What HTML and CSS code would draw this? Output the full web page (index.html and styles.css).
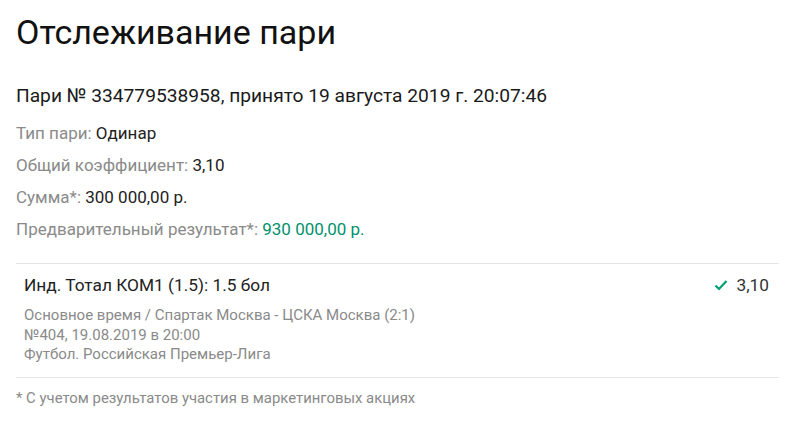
FILE: index.html
```html
<!DOCTYPE html>
<html lang="ru">
<head>
    <meta charset="UTF-8">
    <title>Отслеживание пари</title>
    <link rel="stylesheet" href="styles.css">
</head>
<body>
    <div class="tracking">
        <h1 class="tracking-title">Отслеживание пари</h1>

        <div class="bet-number">Пари № 334779538958, принято 19 августа 2019 г. 20:07:46</div>

        <div class="bet-info">
            <div class="info-row"><span class="label">Тип пари:</span> Одинар</div>
            <div class="info-row"><span class="label">Общий коэффициент:</span> 3,10</div>
            <div class="info-row"><span class="label">Сумма*:</span> 300 000,00 р.</div>
            <div class="info-row"><span class="label">Предварительный результат*:</span> <span class="win">930 000,00 р.</span></div>
        </div>

        <div class="event">
            <div class="event-head">
                <div class="event-outcome">Инд. Тотал КОМ1 (1.5): 1.5 бол</div>
                <div class="event-coef">
                    <svg class="check" width="14" height="12" viewBox="0 0 14 12">
                        <path d="M1.5 6.5 L5 10 L12.5 2" fill="none" stroke="#00a074" stroke-width="2.2"/>
                    </svg>
                    3,10
                </div>
            </div>
            <div class="event-details">
                <div>Основное время / Спартак Москва - ЦСКА Москва (2:1)</div>
                <div>№404, 19.08.2019 в 20:00</div>
                <div>Футбол. Российская Премьер-Лига</div>
            </div>
        </div>

        <div class="footnote">* С учетом результатов участия в маркетинговых акциях</div>
    </div>
</body>
</html>
```

FILE: styles.css
```css
* {
    margin: 0;
    padding: 0;
    box-sizing: border-box;
}

body {
    font-family: Roboto, 'Liberation Sans', sans-serif;
    background: #fff;
    color: #1a1a1a;
}

.tracking {
    padding: 8px 21px 0 16px;
}

.tracking-title {
    font-size: 34px;
    font-weight: 400;
    line-height: 48px;
    color: #111;
}

.bet-number {
    font-size: 19.2px;
    line-height: 24px;
    margin-top: 28px;
    color: #1a1a1a;
}

.bet-info {
    margin-top: 9px;
}

.info-row {
    font-size: 17px;
    line-height: 32px;
    color: #222;
}

.label {
    color: #8a8a8a;
}

.win {
    color: #00916c;
}

.event {
    margin-top: 18px;
    border-top: 1px solid #e6e6e6;
    border-bottom: 1px solid #e6e6e6;
    padding: 10px 10px 12px 8px;
}

.event-head {
    display: flex;
    justify-content: space-between;
    align-items: center;
    font-size: 17.3px;
    line-height: 22px;
    color: #222;
}

.event-coef {
    display: flex;
    align-items: center;
    gap: 8px;
    color: #333;
}

.event-details {
    margin-top: 10px;
    font-size: 15px;
    line-height: 19.5px;
    color: #8a8a8a;
}

.footnote {
    margin-top: 10px;
    font-size: 14.9px;
    line-height: 20px;
    color: #8a8a8a;
}
```
